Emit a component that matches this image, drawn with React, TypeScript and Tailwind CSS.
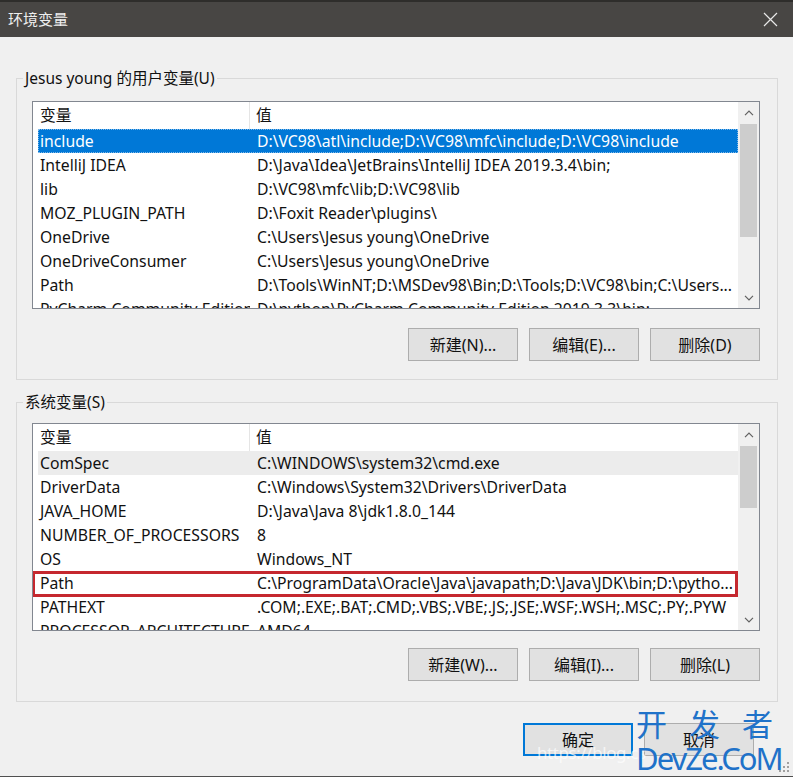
import React from "react";

type Row = { name: string; value: string; state?: "selected" | "hover" | "marked" };

const userVars: Row[] = [
  { name: "include", value: "D:\\VC98\\atl\\include;D:\\VC98\\mfc\\include;D:\\VC98\\include", state: "selected" },
  { name: "IntelliJ IDEA", value: "D:\\Java\\Idea\\JetBrains\\IntelliJ IDEA 2019.3.4\\bin;" },
  { name: "lib", value: "D:\\VC98\\mfc\\lib;D:\\VC98\\lib" },
  { name: "MOZ_PLUGIN_PATH", value: "D:\\Foxit Reader\\plugins\\" },
  { name: "OneDrive", value: "C:\\Users\\Jesus young\\OneDrive" },
  { name: "OneDriveConsumer", value: "C:\\Users\\Jesus young\\OneDrive" },
  { name: "Path", value: "D:\\Tools\\WinNT;D:\\MSDev98\\Bin;D:\\Tools;D:\\VC98\\bin;C:\\Users..." },
  { name: "PyCharm Community Edition", value: "D:\\python\\PyCharm Community Edition 2019.3.3\\bin;" },
];

const systemVars: Row[] = [
  { name: "ComSpec", value: "C:\\WINDOWS\\system32\\cmd.exe", state: "hover" },
  { name: "DriverData", value: "C:\\Windows\\System32\\Drivers\\DriverData" },
  { name: "JAVA_HOME", value: "D:\\Java\\Java 8\\jdk1.8.0_144" },
  { name: "NUMBER_OF_PROCESSORS", value: "8" },
  { name: "OS", value: "Windows_NT" },
  { name: "Path", value: "C:\\ProgramData\\Oracle\\Java\\javapath;D:\\Java\\JDK\\bin;D:\\pytho...", state: "marked" },
  { name: "PATHEXT", value: ".COM;.EXE;.BAT;.CMD;.VBS;.VBE;.JS;.JSE;.WSF;.WSH;.MSC;.PY;.PYW" },
  { name: "PROCESSOR_ARCHITECTURE", value: "AMD64" },
];

function Chevron({ down }: { down?: boolean }) {
  return (
    <svg width="10" height="6" viewBox="0 0 10 6" className={down ? "rotate-180" : ""}>
      <path d="M1 5.2 L5 1.2 L9 5.2" fill="none" stroke="#606060" strokeWidth="1.2" />
    </svg>
  );
}

function ScrollBar({ thumbHeight }: { thumbHeight: string }) {
  return (
    <div className="w-[21px] bg-[#f0f0f0] flex flex-col">
      <div className="h-[21px] flex items-center justify-center">
        <Chevron />
      </div>
      <div className="flex-1 flex flex-col">
        <div className={`${thumbHeight} mt-[1px] mx-[2px] bg-[#cdcdcd]`} />
      </div>
      <div className="h-[21px] flex items-center justify-center">
        <Chevron down />
      </div>
    </div>
  );
}

function VarList({ rows, thumbHeight }: { rows: Row[]; thumbHeight: string }) {
  return (
    <div className="relative w-[728px] h-[208px] border border-[#828790] bg-white flex text-[15.75px]">
      <div className="flex-1 overflow-hidden flex flex-col">
        <div className="h-[27px] shrink-0 flex items-center text-[#111]">
          <div className="w-[217px] h-full flex items-center pl-[7px] border-r border-[#e5e5e5]">变量</div>
          <div className="pl-[6px]">值</div>
        </div>
        {rows.map((r) => (
          <div
            key={r.name}
            className={`relative ml-[5px] w-[700px] h-[24px] shrink-0 flex items-center pt-[2px] whitespace-nowrap ${
              r.state === "selected"
                ? "bg-[#0078d7] text-white outline outline-1 outline-dotted outline-offset-[-1px] outline-[#7fb8e8]"
                : r.state === "hover"
                ? "bg-[#ececec] text-[#111]"
                : "text-[#111]"
            }`}
          >
            <div className="w-[212px] pl-[2px] overflow-hidden">{r.name}</div>
            <div className="flex-1 pl-[7px] overflow-hidden">{r.value}</div>
            {r.state === "marked" && (
              <div className="absolute left-[-6px] top-[0px] w-[706px] h-[26px] border-[3px] border-[#c5282f]" />
            )}
          </div>
        ))}
      </div>
      <ScrollBar thumbHeight={thumbHeight} />
    </div>
  );
}

function Btn({ label, primary }: { label: string; primary?: boolean }) {
  return (
    <button
      className={`w-[110px] h-[33px] bg-[#e1e1e1] text-[16px] text-[#111] flex items-center justify-center ${
        primary ? "border-2 border-[#0078d7]" : "border border-[#adadad]"
      }`}
    >
      {label}
    </button>
  );
}

export default function App() {
  return (
    <div
      className="relative w-[793px] h-[777px] bg-[#f0f0f0] flex flex-col border-b border-[#505050] text-[15.5px] overflow-hidden"
      style={{ fontFamily: '"Noto Sans", "Noto Sans CJK SC", sans-serif' }}
    >
      <div className="h-[37px] shrink-0 bg-[#484644] border-t-2 border-[#2e2d2b] flex items-center justify-between pl-[8px] pr-[15px]">
        <span className="text-[15px] text-[#eeeeee] leading-none">环境变量</span>
        <svg width="15" height="15" viewBox="0 0 15 15">
          <path d="M1 1 L14 14 M14 1 L1 14" stroke="#e8e8e8" strokeWidth="1.2" />
        </svg>
      </div>

      <div className="flex flex-col pl-[16px] pr-[15px] pt-[31px]">
        <fieldset className="border border-[#d9d9d9] p-0 m-0">
          <legend className="ml-[6px] px-[2px] leading-[20px] text-[#111]">Jesus young 的用户变量(U)</legend>
          <div className="flex flex-col pt-[13px] pl-[15px] pr-[17px] pb-[18px]">
            <VarList rows={userVars} thumbHeight="h-[113px]" />
            <div className="flex justify-end gap-[11px] mt-[19px]">
              <Btn label="新建(N)..." />
              <Btn label="编辑(E)..." />
              <Btn label="删除(D)" />
            </div>
          </div>
        </fieldset>

        <fieldset className="border border-[#d9d9d9] p-0 m-0 mt-[12px]">
          <legend className="ml-[6px] px-[2px] leading-[20px] text-[#111]">系统变量(S)</legend>
          <div className="flex flex-col pt-[11px] pl-[15px] pr-[17px] pb-[20px]">
            <VarList rows={systemVars} thumbHeight="h-[62px]" />
            <div className="flex justify-end gap-[11px] mt-[17px]">
              <Btn label="新建(W)..." />
              <Btn label="编辑(I)..." />
              <Btn label="删除(L)" />
            </div>
          </div>
        </fieldset>

        <div className="flex justify-end gap-[11px] mt-[21px] pr-[24px]">
          <Btn label="确定" primary />
          <Btn label="取消" />
        </div>
      </div>

      {/* watermark */}
      <div className="absolute left-[537px] top-[744px] text-[17px] text-white/70 leading-none tracking-tight whitespace-nowrap">
        https://blog.cs
      </div>
      <div className="absolute left-[636px] top-[709px] w-max flex flex-col items-start text-[#1f72c9] leading-none whitespace-nowrap">
        <div className="text-[31px] tracking-[22px]">开发者</div>
        <div className="text-[31px] mt-[3px] tracking-[-2px]">DevZe.CoM</div>
      </div>

      <svg className="absolute right-[3px] bottom-[3px]" width="12" height="12" viewBox="0 0 12 12">
        {[
          [9, 1],
          [5, 5],
          [9, 5],
          [1, 9],
          [5, 9],
          [9, 9],
        ].map(([x, y]) => (
          <rect key={`${x}-${y}`} x={x} y={y} width="2" height="2" fill="#a0a0a0" />
        ))}
      </svg>
    </div>
  );
}
